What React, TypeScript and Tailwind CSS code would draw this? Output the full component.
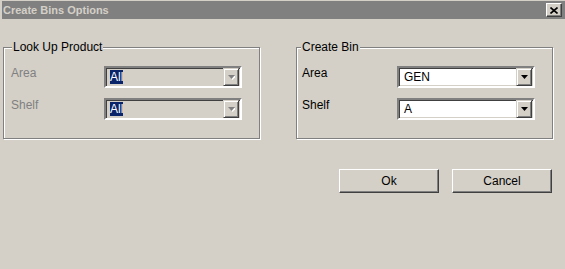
import React from 'react';

const font = { fontFamily: '"Liberation Sans", Arial, sans-serif' };

function Arrow({ disabled }: { disabled?: boolean }) {
    return (
        <svg width="7" height="5" viewBox="0 0 7 5" className="block">
            {disabled && <path d="M1 1h7L4.5 5z" fill="#ffffff" />}
            <path d="M0 0h7L3.5 4z" fill={disabled ? '#808080' : '#000000'} />
        </svg>
    );
}

function Combo({ value, disabled, highlight }: { value: string; disabled?: boolean; highlight?: boolean }) {
    return (
        <div
            className={`w-[138px] h-[22px] border-2 border-t-[#808080] border-l-[#808080] border-b-white border-r-white shadow-[inset_1px_1px_0_#404040,inset_-1px_-1px_0_#d4d0c8] flex items-center ${disabled ? 'bg-[#d4d0c8]' : 'bg-white'}`}
        >
            <div className={`flex-1 flex items-center ${highlight ? 'pl-[4px]' : 'pl-[5px]'}`}>
                <span className={`text-[12px] leading-[14px] ${highlight ? 'bg-[#0a246a] text-white' : 'text-black'}`}>{value}</span>
            </div>
            <div className="w-[16px] h-[18px] mr-[1px] border border-t-[#d4d0c8] border-l-[#d4d0c8] border-b-[#404040] border-r-[#404040] shadow-[inset_1px_1px_0_#fff,inset_-1px_-1px_0_#808080] bg-[#d4d0c8] flex items-center justify-center">
                <Arrow disabled={disabled} />
            </div>
        </div>
    );
}

function Group({ title, children, legendMl, padL }: { title: string; children: React.ReactNode; legendMl: string; padL: string }) {
    return (
        <div className="w-[257px] h-[92px] border border-[#808080] shadow-[inset_1px_1px_0_#fff,1px_1px_0_#fff]">
            <div className={`-mt-[8px] ${legendMl} w-fit px-[1px] bg-[#d4d0c8] text-[12px] leading-[14px] text-black`}>{title}</div>
            <div className={`${padL} pt-[12px] flex flex-col gap-[10px]`}>{children}</div>
        </div>
    );
}

function Row({ label, labelW, disabled, children }: { label: string; labelW: string; disabled?: boolean; children: React.ReactNode }) {
    return (
        <div className="flex items-start">
            <span className={`${labelW} text-[12px] leading-[14px] ${disabled ? 'text-[#808080]' : 'text-black'}`}>{label}</span>
            {children}
        </div>
    );
}

function Button({ label }: { label: string }) {
    return (
        <button className="w-[100px] h-[24px] bg-[#d4d0c8] border border-t-white border-l-white border-b-[#404040] border-r-[#404040] shadow-[inset_-1px_-1px_0_#808080] text-[12px] leading-[14px] text-black">
            {label}
        </button>
    );
}

export default function App() {
    return (
        <div className="w-[565px] h-[269px] bg-[#d4d0c8] pt-[1px] overflow-hidden" style={font}>
            <div className="ml-[2px] h-[18px] bg-[#808080] flex items-center justify-between pl-[1px] pr-[3px]">
                <span className="text-[11px] font-bold text-[#d4d0c8] leading-[14px]">Create Bins Options</span>
                <div className="w-[16px] h-[14px] bg-[#d4d0c8] border border-t-white border-l-white border-b-[#404040] border-r-[#404040] shadow-[inset_-1px_-1px_0_#808080] flex items-center justify-center">
                    <svg width="8" height="7" viewBox="0 0 8 7">
                        <path d="M0.5 0.5l7 6M7.5 0.5l-7 6" stroke="#000" strokeWidth="1.6" />
                    </svg>
                </div>
            </div>

            <div className="pl-[3px] mt-[28px] flex gap-[36px]">
                <Group title="Look Up Product" legendMl="ml-[8px]" padL="pl-[7px]">
                    <Row label="Area" labelW="w-[93px]" disabled>
                        <Combo value="All" disabled highlight />
                    </Row>
                    <Row label="Shelf" labelW="w-[93px]" disabled>
                        <Combo value="All" disabled highlight />
                    </Row>
                </Group>
                <Group title="Create Bin" legendMl="ml-[4px]" padL="pl-[5px]">
                    <Row label="Area" labelW="w-[95px]">
                        <Combo value="GEN" />
                    </Row>
                    <Row label="Shelf" labelW="w-[95px]">
                        <Combo value="A" />
                    </Row>
                </Group>
            </div>

            <div className="mt-[30px] pr-[13px] flex justify-end gap-[13px]">
                <Button label="Ok" />
                <Button label="Cancel" />
            </div>
        </div>
    );
}
